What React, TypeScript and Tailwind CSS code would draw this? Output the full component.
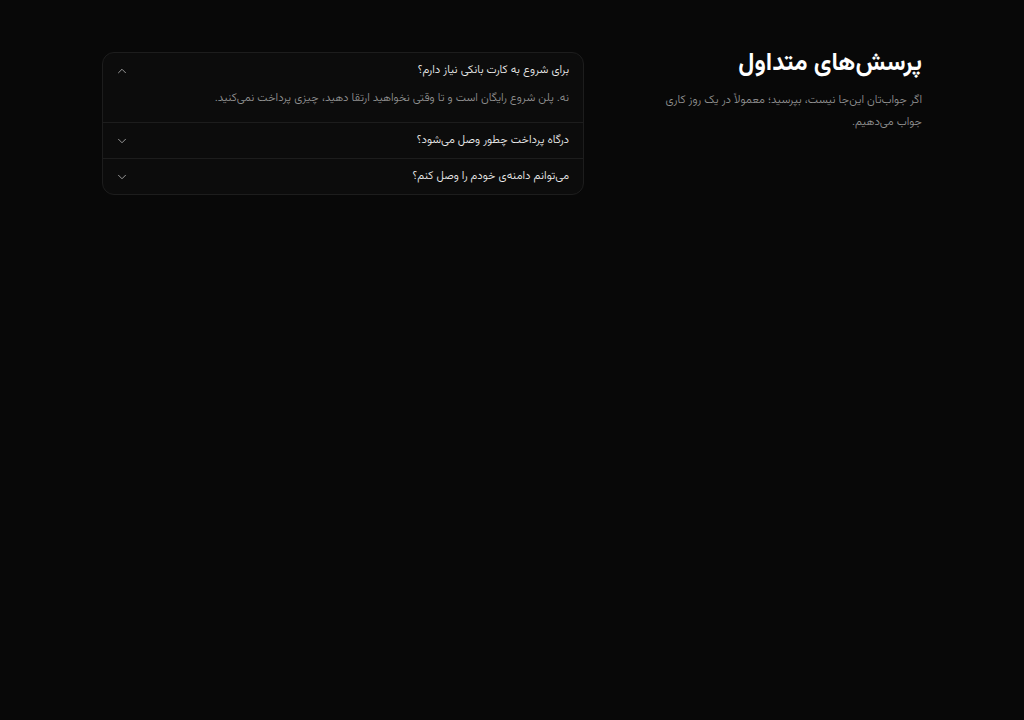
import { useState } from "react"
import { ChevronDown } from "lucide-react"

const faqs = [
  {
    q: "برای شروع به کارت بانکی نیاز دارم؟",
    a: "نه. پلن شروع رایگان است و تا وقتی نخواهید ارتقا دهید، چیزی پرداخت نمی‌کنید.",
  },
  {
    q: "درگاه پرداخت چطور وصل می‌شود؟",
    a: "از بخش تنظیمات فروشگاه، درگاه موردنظر را انتخاب کنید و کلید آن را وارد کنید.",
  },
  {
    q: "می‌توانم دامنه‌ی خودم را وصل کنم؟",
    a: "بله. در پلن‌های پولی می‌توانید دامنه‌ی اختصاصی خود را متصل کنید.",
  },
]

export default function App() {
  const [open, setOpen] = useState<number | null>(0)

  return (
    <div
      dir="rtl"
      className="min-h-screen bg-[#080808] text-[#ededed] font-light"
      style={{ fontFamily: '"Vazirmatn", "Noto Sans Arabic", "DejaVu Sans", sans-serif' }}
    >
      <div className="max-w-[820px] mx-auto pt-[52px] grid grid-cols-[282px_1fr] gap-14">
        <div className="-mt-[2px]">
          <h1 className="text-[24.5px] leading-[28px] font-bold text-white">پرسش‌های متداول</h1>
          <p className="mt-[11px] text-[11.5px] leading-[22px] text-[#939393]">
            اگر جواب‌تان این‌جا نیست، بپرسید؛ معمولاً در یک روز کاری جواب می‌دهیم.
          </p>
        </div>

        <div className="self-start border border-[#1d1d1d] bg-[#0c0c0c] rounded-xl overflow-hidden">
          {faqs.map((item, i) => {
            const isOpen = open === i
            return (
              <div key={i} className={i > 0 ? "border-t border-[#1d1d1d]" : ""}>
                <button
                  onClick={() => setOpen(isOpen ? null : i)}
                  className="w-full h-[35px] pr-3.5 pl-3 flex items-center justify-between text-[11.5px] text-[#f0f0f0]"
                >
                  <span>{item.q}</span>
                  <ChevronDown
                    size={14}
                    strokeWidth={1.6}
                    className={"text-[#a3a3a3] transition-transform " + (isOpen ? "rotate-180" : "")}
                  />
                </button>
                {isOpen && (
                  <div className="px-3.5 pb-[14px] text-[11.5px] leading-5 text-[#939393]">{item.a}</div>
                )}
              </div>
            )
          })}
        </div>
      </div>
    </div>
  )
}
